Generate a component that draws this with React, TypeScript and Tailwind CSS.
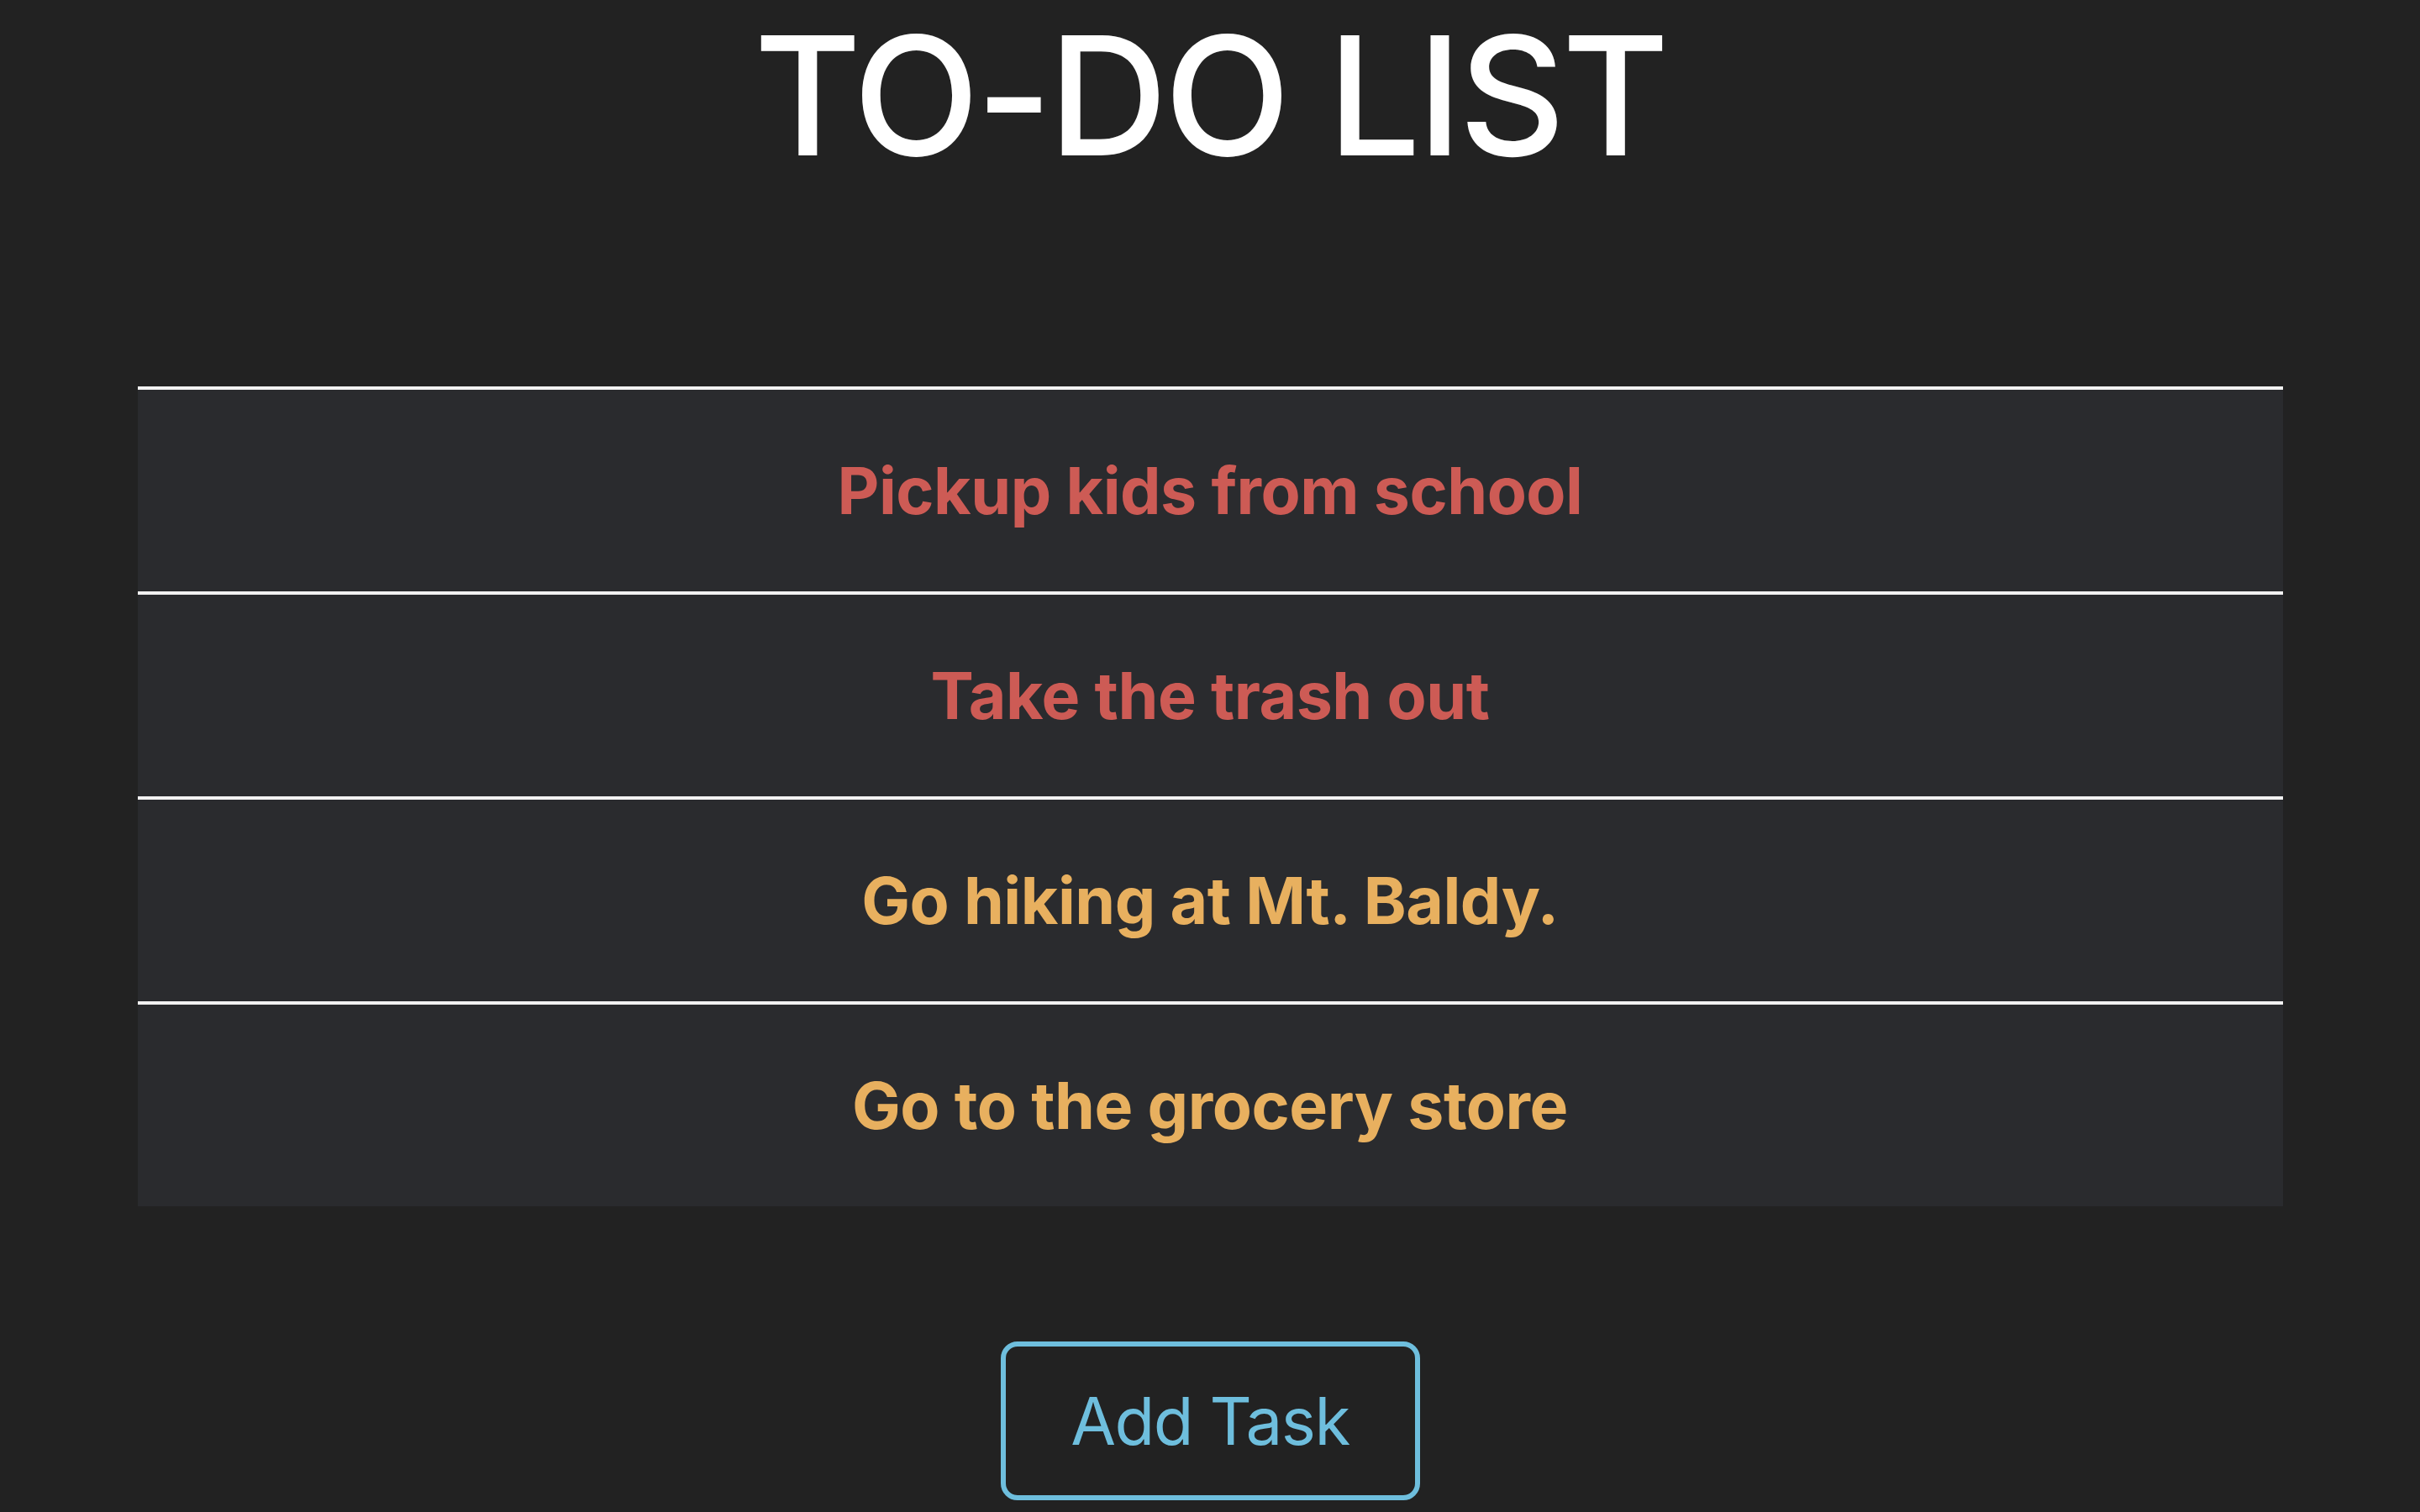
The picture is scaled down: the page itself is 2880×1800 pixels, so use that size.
export default function App() {
  const tasks = [
    { text: "Pickup kids from school", color: "text-[#cd5b55]" },
    { text: "Take the trash out", color: "text-[#cd5b55]" },
    { text: "Go hiking at Mt. Baldy.", color: "text-[#e8b05f]" },
    { text: "Go to the grocery store", color: "text-[#e8b05f]" },
  ];
  return (
    <div className="min-h-screen w-full bg-[#222222] flex flex-col items-center font-['Inter','Liberation_Sans',sans-serif]">
      <h1 className="pt-[16px] text-[196px] leading-none font-medium text-white tracking-[-4px]">TO-DO LIST</h1>
      <ul className="mt-[248px] w-[2553px] flex flex-col">
        {tasks.map((t) => (
          <li
            key={t.text}
            className={`h-[244px] border-t-4 border-[#f2f2f2] bg-[#2a2b2e] flex items-center justify-center text-[77px] leading-none font-bold tracking-[-0.5px] ${t.color}`}
          >
            {t.text}
          </li>
        ))}
      </ul>
      <button className="mt-[161px] w-[499px] h-[189px] rounded-[20px] border-[6px] border-[#6ebedd] text-[#6ebedd] text-[78px] leading-none font-normal tracking-[-1.5px] flex items-center justify-center">
        Add Task
      </button>
    </div>
  );
}
